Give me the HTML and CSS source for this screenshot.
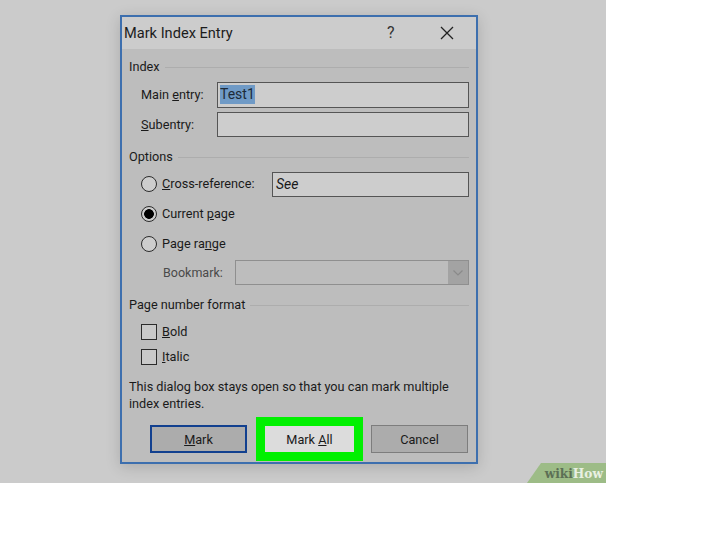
FILE: index.html
```html
<!DOCTYPE html>
<html lang="en">
<head>
<meta charset="utf-8">
<title>Mark Index Entry</title>
<link rel="stylesheet" href="styles.css">
</head>
<body>
<main class="canvas">
  <section class="dialog">
    <header class="titlebar">
      <h1 class="title">Mark Index Entry</h1>
      <span class="help">?</span>
      <svg class="close" width="14" height="14" viewBox="0 0 14 14"><path d="M1 1L13 13M13 1L1 13" stroke="#222" stroke-width="1.3" fill="none"/></svg>
    </header>
    <div class="body">
      <div class="legend legend-index"><span>Index</span><i></i></div>
      <div class="row row-main">
        <label class="field-label">Main <u>e</u>ntry:</label>
        <div class="input"><span class="selected">Test1</span></div>
      </div>
      <div class="row row-sub">
        <label class="field-label"><u>S</u>ubentry:</label>
        <div class="input"></div>
      </div>
      <div class="legend legend-options"><span>Options</span><i></i></div>
      <div class="row row-cross">
        <span class="radio"></span>
        <label class="opt opt-cross"><u>C</u>ross-reference:</label>
        <div class="input input-see"><em>See</em></div>
      </div>
      <div class="row row-current">
        <span class="radio radio-on"></span>
        <label class="opt">Current <u>p</u>age</label>
      </div>
      <div class="row row-range">
        <span class="radio"></span>
        <label class="opt">Page ra<u>n</u>ge</label>
      </div>
      <div class="row row-bookmark">
        <label class="bookmark-label">Bookmark:</label>
        <div class="select">
          <span class="select-arrow">
            <svg width="10" height="6" viewBox="0 0 10 6"><path d="M0.5 0.5L5 5L9.5 0.5" stroke="#8a8a8a" stroke-width="1.2" fill="none"/></svg>
          </span>
        </div>
      </div>
      <div class="legend legend-format"><span>Page number format</span><i></i></div>
      <div class="row row-bold">
        <span class="check"></span>
        <label class="opt"><u>B</u>old</label>
      </div>
      <div class="row row-italic">
        <span class="check"></span>
        <label class="opt"><u>I</u>talic</label>
      </div>
      <p class="note">This dialog box stays open so that you can mark multiple index entries.</p>
      <div class="buttons">
        <button class="btn btn-mark" type="button"><u>M</u>ark</button>
        <button class="btn btn-all" type="button">Mark <u>A</u>ll</button>
        <button class="btn btn-cancel" type="button">Cancel</button>
      </div>
    </div>
  </section>
  <div class="wikihow"><span class="wiki">wiki</span><span class="how">How</span></div>
</main>
</body>
</html>
```
FILE: styles.css
```css
html, body {
  margin: 0;
  padding: 0;
  background: #fff;
}
body {
  width: 728px;
  height: 546px;
  overflow: hidden;
  font-family: Roboto, "Open Sans", sans-serif;
  color: #1a1a1a;
}
.canvas {
  position: relative;
  box-sizing: border-box;
  width: 606px;
  height: 483px;
  padding: 15px 0 0 120px;
  background: #cbcbcb;
  overflow: hidden;
}
.dialog {
  box-sizing: border-box;
  width: 358px;
  height: 449px;
  border: 2px solid #3d6fae;
  background: #bdbdbd;
  box-shadow: 0 3px 14px rgba(0, 0, 0, 0.16);
}
.titlebar {
  display: flex;
  align-items: center;
  height: 32px;
  padding-left: 2px;
  background: #cccccc;
}
.title {
  margin: 0;
  width: 263px;
  font-size: 14.6px;
  font-weight: 400;
  line-height: 32px;
  color: #1c1c1c;
}
.help {
  width: 53px;
  font-size: 16px;
  line-height: 30px;
  color: #333;
}
.close {
  display: block;
}
.body {
  padding: 0 7px;
  font-size: 12.7px;
  line-height: 16px;
}
.legend {
  display: flex;
  align-items: center;
  gap: 5px;
  height: 16px;
}
.legend i {
  flex: 1;
  height: 1px;
  background: #adadad;
}
.legend-index { margin-top: 10px; }
.legend-options { margin-top: 12px; }
.legend-format { margin-top: 12px; }
.row {
  display: flex;
  align-items: center;
}
.row-main {
  height: 26px;
  margin-top: 7px;
  padding-left: 12px;
}
.row-sub {
  height: 25px;
  margin-top: 4px;
  padding-left: 12px;
}
.field-label {
  width: 76px;
}
.input {
  box-sizing: border-box;
  flex: 1;
  height: 100%;
  padding: 2px 2px 0;
  border: 1.5px solid #555;
  background: #cdcdcd;
  font-size: 14px;
  line-height: 19px;
}
.selected {
  display: inline-block;
  background: #6f9ac6;
  color: #1d2a38;
}
.radio {
  box-sizing: border-box;
  width: 16px;
  height: 16px;
  border: 1.5px solid #2b2b2b;
  border-radius: 50%;
  background: #cdcdcd;
}
.radio-on {
  background: radial-gradient(circle, #000 0 4.5px, #cdcdcd 5.2px);
}
.opt {
  margin-left: 5px;
}
.row-cross {
  height: 25px;
  margin-top: 7px;
  padding-left: 12px;
}
.row-cross .radio,
.row-cross .opt {
  margin-bottom: 2px;
}
.opt-cross {
  width: 110px;
}
.input-see {
  padding-left: 3px;
}
.row-current {
  height: 20px;
  margin-top: 7px;
  padding-left: 12px;
}
.row-range {
  height: 20px;
  margin-top: 10px;
  padding-left: 12px;
}
.row-bookmark {
  height: 25px;
  margin-top: 6px;
  padding-left: 34px;
}
.bookmark-label {
  width: 72px;
  font-size: 12.5px;
  color: #4a4a4a;
}
.select {
  box-sizing: border-box;
  display: flex;
  justify-content: flex-end;
  flex: 1;
  height: 100%;
  border: 1px solid #8f8f8f;
  background: #bdbdbd;
}
.select-arrow {
  display: flex;
  align-items: center;
  justify-content: center;
  width: 20px;
  background: #a3a3a3;
}
.row-bold {
  height: 20px;
  margin-top: 9px;
  padding-left: 12px;
}
.row-italic {
  height: 20px;
  margin-top: 5px;
  padding-left: 12px;
}
.check {
  box-sizing: border-box;
  width: 16px;
  height: 16px;
  border: 1.5px solid #2b2b2b;
  background: #c9c9c9;
}
.note {
  margin: 11px 0 0;
  width: 335px;
  line-height: 17px;
}
.buttons {
  display: flex;
  align-items: center;
  margin-top: 5px;
  padding-left: 21px;
}
.btn {
  box-sizing: border-box;
  height: 28px;
  padding: 0;
  font-family: inherit;
  font-size: 12.7px;
  color: #1a1a1a;
  background: #acacac;
}
.btn-mark {
  width: 97px;
  border: 2px solid #12408f;
}
.btn-all {
  width: 107px;
  height: 44px;
  margin-left: 9px;
  border: 9px solid #00f000;
  background: #dcdcdc;
}
.btn-cancel {
  width: 97px;
  margin-left: 8px;
  border: 1px solid #7d7d7d;
}
.wikihow {
  position: absolute;
  right: 0;
  bottom: 0;
  box-sizing: border-box;
  width: 79px;
  height: 20px;
  padding: 2px 3px 0 14px;
  background: #9dbc87;
  clip-path: polygon(14px 0, 100% 0, 100% 100%, 0 100%);
  font-family: "DejaVu Serif", "Liberation Serif", serif;
  font-size: 12.2px;
  font-weight: 700;
  line-height: 18px;
  text-align: right;
  white-space: nowrap;
}
.wiki { color: #5c6f55; }
.how { color: #e9f0e2; }
```
